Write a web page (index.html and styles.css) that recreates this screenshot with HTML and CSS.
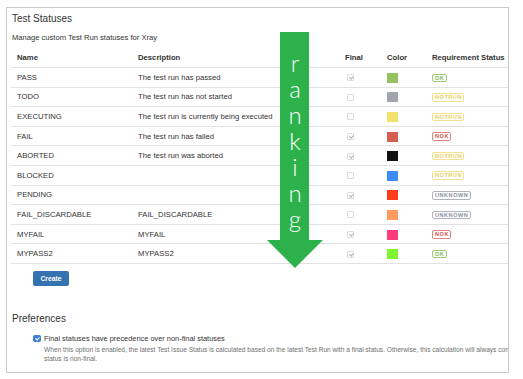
FILE: index.html
```html
<!DOCTYPE html>
<html lang="en">
<head>
    <meta charset="UTF-8">
    <title>Test Statuses</title>
    <link rel="stylesheet" href="styles.css">
</head>
<body>

    <div class="shot">
        <h2>Test Statuses</h2>
        <p class="lead">Manage custom Test Run statuses for Xray</p>

        <table class="statuses">
            <colgroup>
                <col class="w-name">
                <col class="w-desc">
                <col class="w-final">
                <col class="w-color">
                <col class="w-req">
            </colgroup>
            <thead>
                <tr>
                    <th>Name</th>
                    <th>Description</th>
                    <th>Final</th>
                    <th>Color</th>
                    <th>Requirement Status</th>
                </tr>
            </thead>
            <tbody>
                <tr>
                    <td>PASS</td>
                    <td>The test run has passed</td>
                    <td><span class="cb on"></span></td>
                    <td><span class="swatch c-pass"></span></td>
                    <td><span class="badge ok">OK</span></td>
                </tr>
                <tr>
                    <td>TODO</td>
                    <td>The test run has not started</td>
                    <td><span class="cb"></span></td>
                    <td><span class="swatch c-todo"></span></td>
                    <td><span class="badge notrun">NOTRUN</span></td>
                </tr>
                <tr>
                    <td>EXECUTING</td>
                    <td>The test run is currently being executed</td>
                    <td><span class="cb"></span></td>
                    <td><span class="swatch c-exec"></span></td>
                    <td><span class="badge notrun">NOTRUN</span></td>
                </tr>
                <tr>
                    <td>FAIL</td>
                    <td>The test run has failed</td>
                    <td><span class="cb on"></span></td>
                    <td><span class="swatch c-fail"></span></td>
                    <td><span class="badge nok">NOK</span></td>
                </tr>
                <tr>
                    <td>ABORTED</td>
                    <td>The test run was aborted</td>
                    <td><span class="cb on"></span></td>
                    <td><span class="swatch c-aborted"></span></td>
                    <td><span class="badge notrun">NOTRUN</span></td>
                </tr>
                <tr>
                    <td>BLOCKED</td>
                    <td></td>
                    <td><span class="cb"></span></td>
                    <td><span class="swatch c-blocked"></span></td>
                    <td><span class="badge notrun">NOTRUN</span></td>
                </tr>
                <tr>
                    <td>PENDING</td>
                    <td></td>
                    <td><span class="cb on"></span></td>
                    <td><span class="swatch c-pending"></span></td>
                    <td><span class="badge unknown">UNKNOWN</span></td>
                </tr>
                <tr>
                    <td>FAIL_DISCARDABLE</td>
                    <td>FAIL_DISCARDABLE</td>
                    <td><span class="cb"></span></td>
                    <td><span class="swatch c-discard"></span></td>
                    <td><span class="badge unknown">UNKNOWN</span></td>
                </tr>
                <tr>
                    <td>MYFAIL</td>
                    <td>MYFAIL</td>
                    <td><span class="cb on"></span></td>
                    <td><span class="swatch c-myfail"></span></td>
                    <td><span class="badge nok">NOK</span></td>
                </tr>
                <tr>
                    <td>MYPASS2</td>
                    <td>MYPASS2</td>
                    <td><span class="cb on"></span></td>
                    <td><span class="swatch c-mypass"></span></td>
                    <td><span class="badge ok">OK</span></td>
                </tr>
            </tbody>
        </table>

        <button class="create-btn">Create</button>

        <h2 class="prefs-title">Preferences</h2>
        <div class="pref">
            <span class="pref-check"></span>
            <span>Final statuses have precedence over non-final statuses</span>
        </div>
        <p class="pref-desc">When this option is enabled, the latest Test Issue Status is calculated based on the latest Test Run with a final status. Otherwise, this calculation will always consider the latest Test Run, even if its<br>status is non-final.</p>

        <!-- overlay: ranking arrow -->
        <div class="arrow">
            <svg width="56" height="236" viewBox="0 0 56 236">
                <rect x="13" y="0" width="29" height="209" fill="#2db24b"/>
                <polygon points="0,208 56,208 28,236" fill="#2db24b"/>
            </svg>
            <div class="word">
                <span>r</span><span>a</span><span>n</span><span>k</span><span>i</span><span>n</span><span>g</span>
            </div>
        </div>
    </div>

</body>
</html>
```

FILE: styles.css
```css
body {
    margin: 0;
    background: white;
    font-family: "Liberation Sans", Arial, sans-serif;
    color: #333;
}

.shot {
    position: relative;
    box-sizing: border-box;
    width: 503px;
    height: 366px;
    margin: 7px 0 0 6px;
    padding: 5px 0 0 4px;
    border: 1px solid #c9c9c9;
    overflow: hidden;
}

h2 {
    margin: 0 0 0 1px;
    font-size: 10px;
    line-height: 12px;
    font-weight: normal;
}

.lead {
    margin: 8px 0 0 1px;
    font-size: 7.6px;
    line-height: 10px;
}

table.statuses {
    table-layout: fixed;
    width: 505px;
    margin-top: 6px;
    border-collapse: collapse;
    font-size: 7.7px;
    line-height: 10px;
}

.w-name { width: 121px; }
.w-desc { width: 207px; }
.w-final { width: 42px; }
.w-color { width: 45px; }
.w-req { width: 90px; }

th, td {
    padding: 0 6px;
    text-align: left;
    border-bottom: 1px solid #e2e2e2;
    white-space: nowrap;
}

th {
    height: 18px;
    font-weight: bold;
}

td {
    height: 17.6px;
    padding-top: 1px;
}

.cb {
    display: block;
    position: relative;
    width: 5px;
    height: 5px;
    margin-left: 2px;
    border: 1px solid #dcdcdc;
    border-radius: 1px;
}

    .cb.on::after {
        content: "";
        position: absolute;
        left: 1.5px;
        top: 0;
        width: 1.5px;
        height: 3px;
        border-right: 1px solid #b5b5b5;
        border-bottom: 1px solid #b5b5b5;
        transform: rotate(45deg);
    }

.swatch {
    display: block;
    width: 11px;
    height: 10px;
}

.c-pass { background: #95c160; }
.c-todo { background: #a3a5ac; }
.c-exec { background: #f2e16b; }
.c-fail { background: #d55e53; }
.c-aborted { background: #111; }
.c-blocked { background: #3f8bf7; }
.c-pending { background: #ff3c1c; }
.c-discard { background: #ff9b5e; }
.c-myfail { background: #fe3c7c; }
.c-mypass { background: #7ef52f; }

.badge {
    display: inline-block;
    padding: 0 1.5px 0 2px;
    border: 1px solid;
    border-radius: 2px;
    font-size: 5.6px;
    line-height: 6.5px;
    font-weight: bold;
    letter-spacing: 0.5px;
    vertical-align: middle;
}

.ok { border-color: #9ccb74; color: #84b757; }
.notrun { border-color: #f4e18c; color: #ead060; }
.nok { border-color: #e0847d; color: #d2574f; }
.unknown { border-color: #aeb3bc; color: #8c929c; }

.create-btn {
    display: block;
    width: 36px;
    height: 15px;
    margin: 7px 0 0 22px;
    padding: 0;
    background-color: #3572b0;
    color: white;
    border: none;
    border-radius: 2px;
    font-family: inherit;
    font-size: 6.8px;
    font-weight: bold;
    cursor: pointer;
}

.prefs-title {
    margin-top: 27px;
}

.pref {
    display: flex;
    align-items: center;
    gap: 3px;
    margin: 9px 0 0 22px;
    font-size: 7.4px;
    line-height: 10px;
}

.pref-check {
    position: relative;
    width: 8px;
    height: 7px;
    background: #3b7fd6;
    border-radius: 2px;
}

    .pref-check::after {
        content: "";
        position: absolute;
        left: 2.8px;
        top: 0.8px;
        width: 1.5px;
        height: 3.2px;
        border-right: 1px solid white;
        border-bottom: 1px solid white;
        transform: rotate(45deg);
    }

.pref-desc {
    margin: 1px 0 0 33px;
    font-size: 6.6px;
    line-height: 9.5px;
    color: #707070;
    white-space: nowrap;
}

.arrow {
    position: absolute;
    left: 260px;
    top: 24px;
    width: 56px;
    height: 236px;
}

    .arrow svg {
        position: absolute;
        left: 0;
        top: 0;
    }

.word {
    position: relative;
    display: flex;
    flex-direction: column;
    align-items: center;
    padding-top: 18px;
    font-family: Lato, "Open Sans", sans-serif;
    font-weight: 300;
    font-size: 24px;
    line-height: 26px;
    color: white;
}
```
